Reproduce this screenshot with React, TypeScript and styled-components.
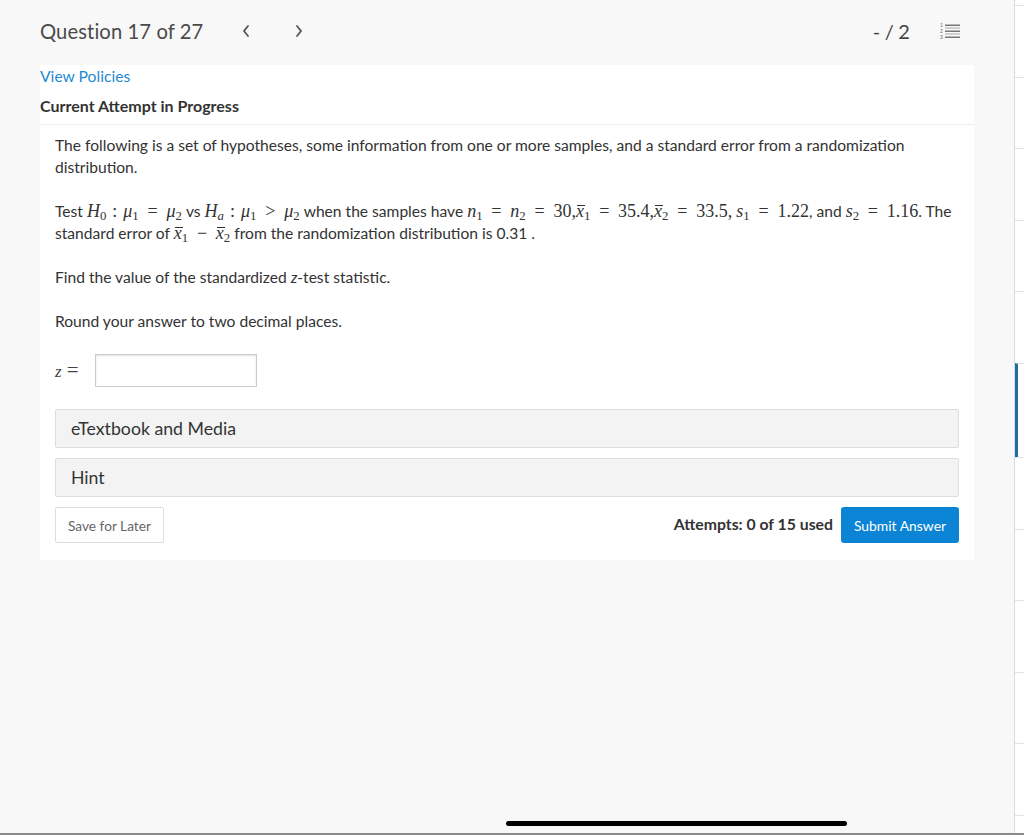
import styled, { createGlobalStyle } from "styled-components";

const GlobalStyle = createGlobalStyle`
  body {
    margin: 0;
    background: #f8f8f8;
    font-family: Lato, "Open Sans", sans-serif;
    color: #333;
  }
`;

const Shell = styled.div`
  display: flex;
  height: 835px;
  position: relative;
  overflow: hidden;
  border-bottom: 2px solid #8a8a8a;
  box-sizing: border-box;
`;

const Main = styled.div`
  flex: 1;
  padding: 0 40px;
`;

const Header = styled.div`
  height: 65px;
  display: flex;
  align-items: center;
  padding-bottom: 4px;
  box-sizing: border-box;
`;

const Title = styled.div`
  font-size: 20.2px;
  color: #4a4a4a;
  letter-spacing: 0.1px;
`;

const Arrows = styled.div`
  display: flex;
  gap: 43px;
  margin-left: 38px;
  color: #555;
`;

const Score = styled.div`
  margin-left: auto;
  font-size: 20px;
  color: #444;
  letter-spacing: 0.2px;
  word-spacing: -1px;
`;

const ListButton = styled.div`
  margin-left: 30px;
  width: 22px;
  display: flex;
  margin-right: 12px;
`;

const Card = styled.div`
  background: #fff;
  padding-bottom: 17px;
`;

const PolicyLink = styled.a`
  display: block;
  color: #1f8ad0;
  font-size: 15.7px;
  line-height: 22px;
  text-decoration: none;
`;

const Attempt = styled.div`
  font-size: 16px;
  font-weight: 700;
  color: #333;
  line-height: 22px;
  padding: 8px 0 7px;
  border-bottom: 1px solid #ececec;
`;

const Body = styled.div`
  padding: 9px 15px 0;
  font-size: 15.6px;
  line-height: 22px;
  color: #333;
`;

const Para = styled.p`
  margin: 0 0 22px;
`;

const Mi = styled.span`
  font-family: "Liberation Serif", "DejaVu Serif", serif;
  font-style: italic;
  font-size: 18px;
`;

const Mn = styled.span`
  font-family: "Liberation Serif", "DejaVu Serif", serif;
  font-size: 18px;
`;

const Mo = styled.span<{ $wide?: boolean }>`
  font-family: "Liberation Serif", "DejaVu Serif", serif;
  font-size: 18px;
  margin: 0 ${(p) => (p.$wide ? "4.8px" : "2px")};
`;

const Sub = styled.sub<{ $italic?: boolean }>`
  font-family: "Liberation Serif", "DejaVu Serif", serif;
  font-size: 12.8px;
  font-style: ${(p) => (p.$italic ? "italic" : "normal")};
  vertical-align: -3px;
  line-height: 0;
`;

const Bar = styled.span`
  position: relative;
  font-family: "Liberation Serif", "DejaVu Serif", serif;
  font-style: italic;
  font-size: 18px;

  &::after {
    content: "";
    position: absolute;
    left: 1px;
    right: -1px;
    top: 0.22em;
    border-top: 1px solid #333;
  }
`;

const AnswerRow = styled.div`
  display: flex;
  align-items: center;
  margin: 2px 0 22px;
`;

const AnswerLabel = styled.span`
  font-family: "Liberation Serif", "DejaVu Serif", serif;
  font-size: 17px;
  font-style: italic;
  color: #444;
  width: 40px;
`;

const AnswerEquals = styled.span`
  font-style: normal;
  font-size: 21px;
  margin-left: 5px;
`;

const AnswerInput = styled.input`
  width: 162px;
  height: 33px;
  box-sizing: border-box;
  border: 1px solid #ccc;
  box-shadow: inset 0 1px 2px rgba(0, 0, 0, 0.12);
  outline: none;
`;

const Panel = styled.div`
  background: #f3f3f3;
  border: 1px solid #ddd;
  border-radius: 2px;
  height: 39px;
  box-sizing: border-box;
  display: flex;
  align-items: center;
  padding-left: 15px;
  font-size: 17.7px;
  color: #333;
  margin-bottom: 10px;
`;

const Footer = styled.div`
  display: flex;
  align-items: center;
`;

const SaveButton = styled.button`
  height: 36px;
  padding: 0 12px;
  background: #fff;
  border: 1px solid #ddd;
  border-radius: 2px;
  font-family: Lato, sans-serif;
  font-size: 13.7px;
  color: #666;
`;

const AttemptsText = styled.span`
  margin-left: auto;
  font-size: 15.8px;
  font-weight: 700;
  color: #333;
  margin-right: 8px;
  margin-top: -3px;
`;

const SubmitButton = styled.button`
  height: 36px;
  width: 118px;
  background: #0b84d6;
  border: none;
  border-radius: 3px;
  font-family: Lato, sans-serif;
  font-size: 13.9px;
  color: #fff;
`;

const Sidebar = styled.div`
  width: 9px;
  background: #fff;
  border-left: 1px solid #dcdcdc;
  padding-top: 5px;
`;

const SideItem = styled.div<{ $active?: boolean }>`
  height: ${(p) => (p.$active ? "94.7px" : "71.5px")};
  box-sizing: border-box;
  border-top: 1px solid #e2e2e2;
  border-left: ${(p) => (p.$active ? "3px solid #1c6fa3" : "none")};
`;

const HomeBar = styled.div`
  position: absolute;
  left: 506px;
  bottom: 7px;
  width: 341px;
  height: 5px;
  border-radius: 3px;
  background: #000;
`;

const Chevron = ({ dir }: { dir: "left" | "right" }) => (
  <svg width="10" height="14" viewBox="0 0 10 14">
    <path
      d={dir === "left" ? "M7 2 L3 7 L7 12" : "M3 2 L7 7 L3 12"}
      fill="none"
      stroke="#555"
      strokeWidth="1.8"
      strokeLinecap="round"
    />
  </svg>
);

const ListIcon = () => (
  <svg width="22" height="18" viewBox="0 0 22 18">
    <text x="0" y="5" fontSize="5" fill="#666" fontFamily="Lato, sans-serif">1</text>
    <text x="0" y="11" fontSize="5" fill="#666" fontFamily="Lato, sans-serif">2</text>
    <text x="0" y="17" fontSize="5" fill="#666" fontFamily="Lato, sans-serif">3</text>
    <rect x="5" y="2.5" width="15" height="1.5" fill="#777" />
    <rect x="5" y="8.5" width="15" height="1.5" fill="#777" />
    <rect x="5" y="14.5" width="15" height="1.5" fill="#777" />
    <rect x="5" y="5.5" width="15" height="1" fill="#aaa" />
    <rect x="5" y="11.5" width="15" height="1" fill="#aaa" />
  </svg>
);

export default function App() {
  const items = [false, false, false, false, false, true, false, false, false, false, false, false];
  return (
    <>
      <GlobalStyle />
      <Shell>
        <Main>
          <Header>
            <Title>Question 17 of 27</Title>
            <Arrows>
              <Chevron dir="left" />
              <Chevron dir="right" />
            </Arrows>
            <Score>- / 2</Score>
            <ListButton>
              <ListIcon />
            </ListButton>
          </Header>
          <Card>
            <PolicyLink href="#">View Policies</PolicyLink>
            <Attempt>Current Attempt in Progress</Attempt>
            <Body>
              <Para>
                The following is a set of hypotheses, some information from one or more samples, and a
                standard error from a randomization distribution.
              </Para>
              <Para>
                Test <Mi>H</Mi>
                <Sub>0</Sub> <Mo>:</Mo> <Mi>μ</Mi>
                <Sub>1</Sub> <Mo $wide>=</Mo> <Mi>μ</Mi>
                <Sub>2</Sub> vs <Mi>H</Mi>
                <Sub $italic>a</Sub> <Mo>:</Mo> <Mi>μ</Mi>
                <Sub>1</Sub> <Mo $wide>&gt;</Mo> <Mi>μ</Mi>
                <Sub>2</Sub> when the samples have <Mi>n</Mi>
                <Sub>1</Sub> <Mo $wide>=</Mo> <Mi>n</Mi>
                <Sub>2</Sub> <Mo $wide>=</Mo> <Mn>30,</Mn>
                <Bar>x</Bar>
                <Sub>1</Sub> <Mo $wide>=</Mo> <Mn>35.4,</Mn>
                <Bar>x</Bar>
                <Sub>2</Sub> <Mo $wide>=</Mo> <Mn>33.5,</Mn> <Mi>s</Mi>
                <Sub>1</Sub> <Mo $wide>=</Mo> <Mn>1.22</Mn>, and <Mi>s</Mi>
                <Sub>2</Sub> <Mo $wide>=</Mo> <Mn>1.16</Mn>. The standard error of <Bar>x</Bar>
                <Sub>1</Sub> <Mo $wide>−</Mo> <Bar>x</Bar>
                <Sub>2</Sub> from the randomization distribution is 0.31 .
              </Para>
              <Para>
                Find the value of the standardized <i>z</i>-test statistic.
              </Para>
              <Para>Round your answer to two decimal places.</Para>
              <AnswerRow>
                <AnswerLabel>
                  z<AnswerEquals>=</AnswerEquals>
                </AnswerLabel>
                <AnswerInput />
              </AnswerRow>
              <Panel>eTextbook and Media</Panel>
              <Panel>Hint</Panel>
              <Footer>
                <SaveButton>Save for Later</SaveButton>
                <AttemptsText>Attempts: 0 of 15 used</AttemptsText>
                <SubmitButton>Submit Answer</SubmitButton>
              </Footer>
            </Body>
          </Card>
        </Main>
        <Sidebar>
          {items.map((active, i) => (
            <SideItem key={i} $active={active} />
          ))}
        </Sidebar>
        <HomeBar />
      </Shell>
    </>
  );
}
